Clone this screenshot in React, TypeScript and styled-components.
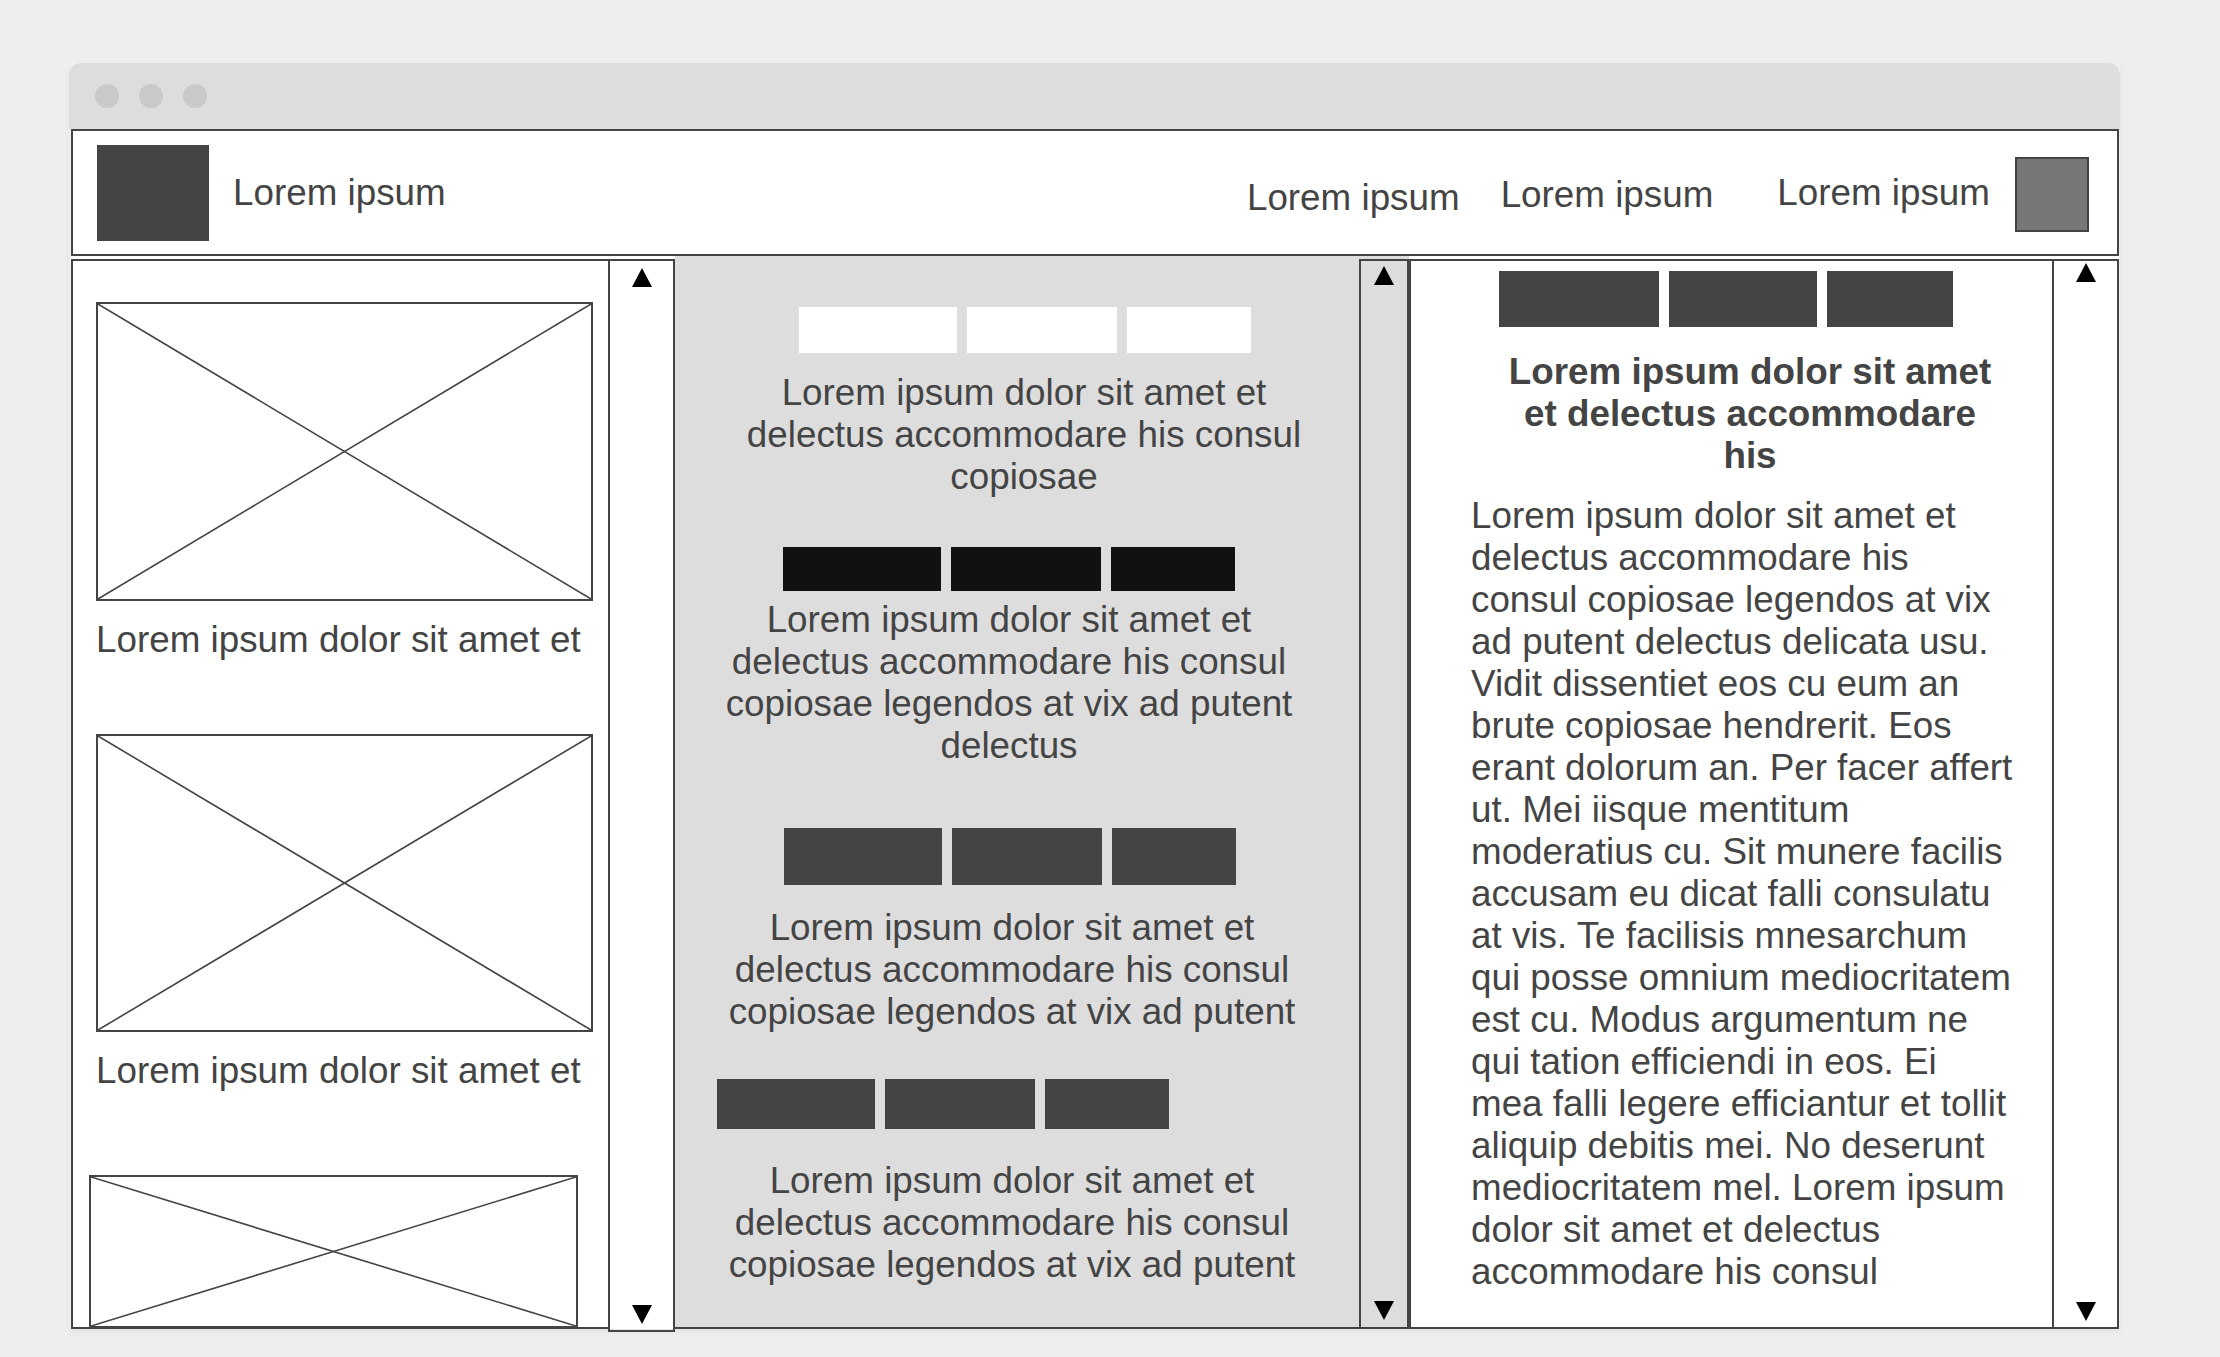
import React from 'react';
import styled, { createGlobalStyle } from 'styled-components';

const GlobalStyle = createGlobalStyle`
  html, body { margin: 0; padding: 0; background: #eeeeee; }
  body { font-family: "Liberation Sans", Arial, Helvetica, sans-serif; color: #444444; }
  * { box-sizing: border-box; }
`;

const INK = '#444444';
const FONT = '36.8px';

const Page = styled.div`
  width: 2220px;
  height: 1357px;
  padding: 63px 0 0 69px;
  overflow: hidden;
`;

const Window = styled.div`
  width: 2051px;
  display: flex;
  flex-direction: column;
  box-shadow: 0 3px 6px rgba(0, 0, 0, 0.05);
`;

const TitleBar = styled.div`
  height: 66px;
  background: #dddddd;
  border-radius: 12px 12px 0 0;
  display: flex;
  align-items: center;
  gap: 20px;
  padding-left: 26px;
`;

const Dot = styled.span`
  width: 24px;
  height: 24px;
  border-radius: 50%;
  background: #c9c9c9;
`;

const WindowBody = styled.div`
  padding: 0 1px 0 2px;
  display: flex;
  flex-direction: column;
`;

const Header = styled.header`
  height: 127px;
  border: 2px solid ${INK};
  background: #ffffff;
  display: flex;
  align-items: center;
  padding: 0 28px 0 24px;
`;

const Logo = styled.div`
  width: 112px;
  height: 96px;
  background: ${INK};
`;

const Brand = styled.span`
  margin-left: 24px;
  font-size: ${FONT};
  line-height: 42px;
  white-space: nowrap;
`;

const NavLink = styled.a<{ $ml: string; $dy: number }>`
  margin-left: ${(p) => p.$ml};
  margin-top: ${(p) => p.$dy * 2}px;
  font-size: ${FONT};
  line-height: 42px;
  color: ${INK};
  text-decoration: none;
  white-space: nowrap;
`;

const Avatar = styled.div`
  width: 74px;
  height: 75px;
  margin-left: 25px;
  margin-top: 4px;
  border: 2px solid ${INK};
  background: #777777;
`;

const Row = styled.div`
  height: 1073px;
  display: flex;
  align-items: flex-start;
  background: #ffffff;
`;

const LeftPanel = styled.div`
  width: 604px;
  margin-top: 3px;
  display: flex;
  align-items: flex-start;
`;

const LeftBody = styled.div`
  width: 537px;
  height: 1070px;
  border: 2px solid ${INK};
  border-right: none;
  padding: 41px 0 0 23px;
  display: flex;
  flex-direction: column;
  align-items: flex-start;
  overflow: hidden;
`;

const Scrollbar = styled.div<{ $w: number; $h: number; $pt: number; $pb: number; $mt?: number; $noTop?: boolean; $noBottom?: boolean; $noRight?: boolean }>`
  flex: none;
  width: ${(p) => p.$w}px;
  height: ${(p) => p.$h}px;
  margin-top: ${(p) => p.$mt ?? 0}px;
  border: 2px solid ${INK};
  ${(p) => (p.$noTop ? 'border-top: none;' : '')}
  ${(p) => (p.$noBottom ? 'border-bottom: none;' : '')}
  ${(p) => (p.$noRight ? 'border-right: none;' : '')}
  padding: ${(p) => p.$pt}px 0 ${(p) => p.$pb}px;
  display: flex;
  flex-direction: column;
  justify-content: space-between;
  align-items: center;
`;

const Arrow = styled.span<{ $down?: boolean }>`
  width: 0;
  height: 0;
  border-left: 10px solid transparent;
  border-right: 10px solid transparent;
  ${(p) => (p.$down ? 'border-top: 19px solid #000;' : 'border-bottom: 19px solid #000;')}
`;

const ImageBox = styled.div<{ $w: number; $h: number; $mt: number; $ml?: number }>`
  flex: none;
  width: ${(p) => p.$w}px;
  height: ${(p) => p.$h}px;
  margin-top: ${(p) => p.$mt}px;
  margin-left: ${(p) => p.$ml ?? 0}px;
  border: 2px solid ${INK};
  background: #ffffff;
  svg { display: block; width: 100%; height: 100%; }
`;

const Caption = styled.p`
  margin: 18px 0 0;
  font-size: ${FONT};
  line-height: 42px;
  white-space: nowrap;
`;

const MiddlePanel = styled.div`
  width: 734px;
  height: 1073px;
  background: #dddddd;
  border-bottom: 2px solid ${INK};
  display: flex;
  align-items: flex-start;
`;

const MiddleContent = styled.div`
  flex: 1;
  display: flex;
  flex-direction: column;
  align-items: center;
`;

const Group = styled.section<{ $mt: number }>`
  margin-top: ${(p) => p.$mt}px;
  align-self: stretch;
  display: flex;
  flex-direction: column;
  align-items: center;
`;

const BarRow = styled.div<{ $h: number; $shift?: number; $ml?: number }>`
  display: flex;
  gap: 10px;
  height: ${(p) => p.$h}px;
  ${(p) => (p.$shift !== undefined ? `margin-left: ${p.$shift * 2}px;` : '')}
  ${(p) => (p.$ml !== undefined ? `margin-left: ${p.$ml}px;` : '')}
`;

const Bar = styled.span<{ $w: number; $tone: string }>`
  width: ${(p) => p.$w}px;
  height: 100%;
  background: ${(p) => p.$tone};
`;

const CenterText = styled.p<{ $gap: number; $shift: number }>`
  margin: ${(p) => p.$gap}px 0 0 ${(p) => p.$shift * 2}px;
  font-size: ${FONT};
  line-height: 42px;
  text-align: center;
  white-space: nowrap;
`;

const RightPanel = styled.div`
  width: 710px;
  height: 1070px;
  margin-top: 3px;
  border: 2px solid ${INK};
  background: #ffffff;
  display: flex;
  align-items: flex-start;
`;

const RightContent = styled.div`
  flex: 1;
  padding: 10px 23px 0 60px;
  display: flex;
  flex-direction: column;
  align-items: flex-start;
`;

const Heading = styled.h2`
  align-self: stretch;
  margin: 24px 0 0;
  font-size: ${FONT};
  line-height: 42px;
  font-weight: 700;
  text-align: center;
  white-space: nowrap;
`;

const BodyText = styled.p`
  margin: 18px 0 0;
  font-size: ${FONT};
  line-height: 42px;
  white-space: nowrap;
`;

const Lines: React.FC<{ lines: string[] }> = ({ lines }) => (
  <>
    {lines.map((l, i) => (
      <React.Fragment key={i}>
        {l}
        {i < lines.length - 1 && <br />}
      </React.Fragment>
    ))}
  </>
);

const Placeholder: React.FC<{ w: number; h: number; mt: number; ml?: number }> = ({ w, h, mt, ml }) => (
  <ImageBox $w={w} $h={h} $mt={mt} $ml={ml}>
    <svg viewBox="0 0 100 100" preserveAspectRatio="none">
      <line x1="0" y1="0" x2="100" y2="100" stroke={INK} strokeWidth="1.6" vectorEffect="non-scaling-stroke" />
      <line x1="100" y1="0" x2="0" y2="100" stroke={INK} strokeWidth="1.6" vectorEffect="non-scaling-stroke" />
    </svg>
  </ImageBox>
);

const MID_W = [158, 150, 124];
const RIGHT_W = [160, 148, 126];

const shortText = ['Lorem ipsum dolor sit amet et', 'delectus accommodare his consul', 'copiosae'];
const longText = [
  'Lorem ipsum dolor sit amet et',
  'delectus accommodare his consul',
  'copiosae legendos at vix ad putent',
  'delectus',
];
const midText = ['Lorem ipsum dolor sit amet et', 'delectus accommodare his consul', 'copiosae legendos at vix ad putent'];

const groups = [
  { mt: 51, h: 46, tone: '#ffffff', barShift: 8, gap: 19, textShift: 7, lines: shortText },
  { mt: 49, h: 44, tone: '#111111', barShift: -8, gap: 8, textShift: -8, lines: longText },
  { mt: 61, h: 57, tone: INK, barShift: -7.5, gap: 22, textShift: -5, lines: midText },
  { mt: 46, h: 50, tone: INK, barShift: -74, gap: 31, textShift: -5, lines: midText },
];

const headingLines = ['Lorem ipsum dolor sit amet', 'et delectus accommodare', 'his'];

const bodyLines = [
  'Lorem ipsum dolor sit amet et',
  'delectus accommodare his',
  'consul copiosae legendos at vix',
  'ad putent delectus delicata usu.',
  'Vidit dissentiet eos cu eum an',
  'brute copiosae hendrerit. Eos',
  'erant dolorum an. Per facer affert',
  'ut. Mei iisque mentitum',
  'moderatius cu. Sit munere facilis',
  'accusam eu dicat falli consulatu',
  'at vis. Te facilisis mnesarchum',
  'qui posse omnium mediocritatem',
  'est cu. Modus argumentum ne',
  'qui tation efficiendi in eos. Ei',
  'mea falli legere efficiantur et tollit',
  'aliquip debitis mei. No deserunt',
  'mediocritatem mel. Lorem ipsum',
  'dolor sit amet et delectus',
  'accommodare his consul',
];

export default function App() {
  return (
    <>
      <GlobalStyle />
      <Page>
        <Window>
          <TitleBar>
            <Dot />
            <Dot />
            <Dot />
          </TitleBar>
          <WindowBody>
            <Header>
              <Logo />
              <Brand>Lorem ipsum</Brand>
              <NavLink $ml="auto" $dy={5}>Lorem ipsum</NavLink>
              <NavLink $ml="41px" $dy={2}>Lorem ipsum</NavLink>
              <NavLink $ml="64px" $dy={0}>Lorem ipsum</NavLink>
              <Avatar />
            </Header>
            <Row>
              <LeftPanel>
                <LeftBody>
                  <Placeholder w={497} h={299} mt={0} />
                  <Caption>Lorem ipsum dolor sit amet et</Caption>
                  <Placeholder w={497} h={298} mt={73} />
                  <Caption>Lorem ipsum dolor sit amet et</Caption>
                  <Placeholder w={489} h={153} mt={83} ml={-7} />
                </LeftBody>
                <Scrollbar $w={67} $h={1073} $pt={7} $pb={6}>
                  <Arrow />
                  <Arrow $down />
                </Scrollbar>
              </LeftPanel>
              <MiddlePanel>
                <MiddleContent>
                  {groups.map((g, i) => (
                    <Group key={i} $mt={g.mt}>
                      <BarRow $h={g.h} $shift={g.barShift}>
                        {MID_W.map((w, j) => (
                          <Bar key={j} $w={w} $tone={g.tone} />
                        ))}
                      </BarRow>
                      <CenterText $gap={g.gap} $shift={g.textShift}>
                        <Lines lines={g.lines} />
                      </CenterText>
                    </Group>
                  ))}
                </MiddleContent>
                <Scrollbar $w={50} $h={1068} $mt={3} $pt={5} $pb={7} $noBottom>
                  <Arrow />
                  <Arrow $down />
                </Scrollbar>
              </MiddlePanel>
              <RightPanel>
                <RightContent>
                  <BarRow $h={56} $ml={28}>
                    {RIGHT_W.map((w, j) => (
                      <Bar key={j} $w={w} $tone={INK} />
                    ))}
                  </BarRow>
                  <Heading>
                    <Lines lines={headingLines} />
                  </Heading>
                  <BodyText>
                    <Lines lines={bodyLines} />
                  </BodyText>
                </RightContent>
                <Scrollbar $w={65} $h={1066} $pt={2} $pb={6} $noTop $noBottom $noRight>
                  <Arrow />
                  <Arrow $down />
                </Scrollbar>
              </RightPanel>
            </Row>
          </WindowBody>
        </Window>
      </Page>
    </>
  );
}
